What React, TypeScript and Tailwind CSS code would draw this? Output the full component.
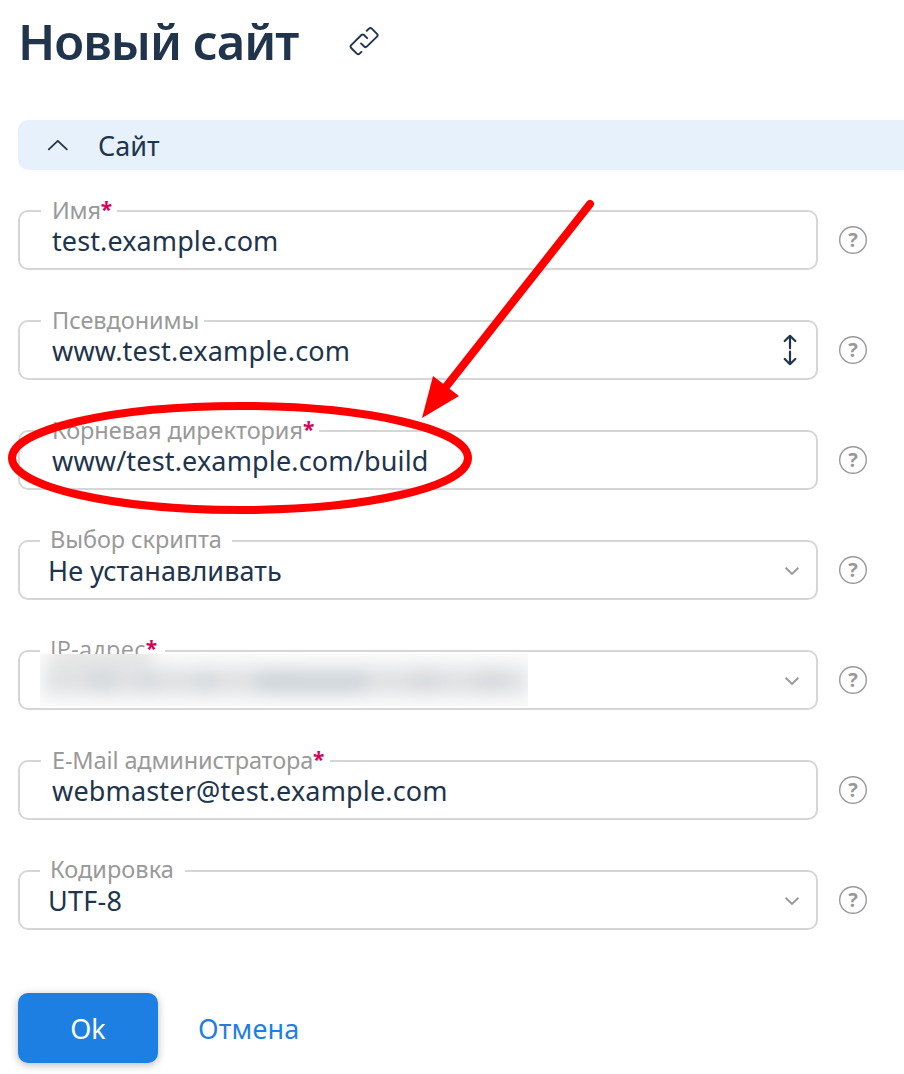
type FieldProps = {
  label: string;
  value?: string;
  required?: boolean;
  kind?: "text" | "list" | "select";
  labelClass: string;
  valueClass?: string;
  redacted?: boolean;
};

function LinkIcon() {
  return (
    <svg className="mt-[26px] h-[30px] w-8" viewBox="348 26 32 30" fill="none" stroke="#20344c" strokeWidth="1.9" strokeLinecap="round" strokeLinejoin="round">
      <path d="M367.2 38.2 L364 35 Q362.7 33.8 361.4 35 L351.2 45.2 Q349.8 46.6 351.2 48 L356.8 53.6 Q358.2 55 359.6 53.6 L361.4 51.8" />
      <path d="M366.7 30.8 L369 28.6 Q370.4 27.3 371.8 28.6 L377 33.8 Q378.4 35.2 377 36.6 L367 46.4 Q365.6 47.8 364.2 46.5 L361 43.4" />
    </svg>
  );
}

function ChevronUp() {
  return (
    <svg className="h-3 w-6" viewBox="0 0 24 12" fill="none" stroke="#20344c" strokeWidth="1.8" strokeLinecap="round" strokeLinejoin="round">
      <path d="M2.8 10.4 L11.8 1.8 L20.8 10.4" />
    </svg>
  );
}

function ChevronDown() {
  return (
    <svg className="mr-[15px] mt-0.5 h-[10px] w-[18px]" viewBox="0 0 18 10" fill="none" stroke="#999999" strokeWidth="1.9">
      <path d="M2.6 1.8 L9 8 L15.4 1.8" />
    </svg>
  );
}

function ExpandIcon() {
  return (
    <svg className="mr-4 h-8 w-5" viewBox="0 0 20 32" fill="none" stroke="#20344c" strokeWidth="2.2" strokeLinecap="round" strokeLinejoin="round">
      <path d="M4.7 7 L10 1.8 L15.3 7 M10 2.4 V14.3" />
      <path d="M4.7 25 L10 30.2 L15.3 25 M10 29.6 V17.7" />
    </svg>
  );
}

function Help() {
  return (
    <span className="flex size-7 items-center justify-center rounded-full text-[20px] font-bold leading-none text-[#999999] shadow-[inset_0_0_0_1.4px_#999999]">
      ?
    </span>
  );
}

function Redaction() {
  return (
    <svg className="absolute left-5 top-[2px] h-[52px] w-[488px]" viewBox="40 654 488 52">
      <defs>
        <filter id="soft" x="-20%" y="-150%" width="140%" height="400%">
          <feGaussianBlur stdDeviation="9" />
        </filter>
      </defs>
      <rect x="40" y="654" width="488" height="52" fill="#fbfbfb" />
      <g filter="url(#soft)">
        <rect x="44" y="667" width="484" height="28" fill="#dfe1e3" />
        <rect x="50" y="644" width="102" height="24" fill="#e6e6e6" />
        <rect x="90" y="670" width="24" height="22" fill="#d3d8dc" />
        <rect x="140" y="674" width="16" height="18" fill="#d3d8dc" />
        <rect x="196" y="672" width="20" height="20" fill="#d3d8dc" />
        <rect x="256" y="671" width="38" height="22" fill="#cdd3d8" />
        <rect x="290" y="672" width="76" height="21" fill="#cdd3d8" />
        <rect x="412" y="671" width="28" height="20" fill="#d5d8dc" />
        <rect x="476" y="671" width="30" height="20" fill="#d5d8dc" />
      </g>
    </svg>
  );
}

function Field({ label, value, required, kind = "text", labelClass, valueClass = "", redacted }: FieldProps) {
  const select = kind === "select";
  return (
    <div className="flex items-center gap-[21px]">
      <div className={`relative flex h-[60px] w-[800px] items-center justify-between rounded-[10px] border-2 border-[#d6d6d6] ${select ? "pl-7" : "pl-8"}`}>
        <div className={`absolute flex h-6 whitespace-nowrap bg-white text-[23.5px] leading-6 text-[#999999] ${select ? "-top-[15px] left-5 pl-[10px]" : "-top-[14px] left-[21px] pl-[11px]"} ${labelClass}`}>
          <span>{label}</span>
          {required && <span className="text-[21px] font-bold leading-[23px] text-[#d5005a]">*</span>}
        </div>
        <span className={`whitespace-nowrap pt-0.5 text-[27px] leading-8 ${valueClass}`}>{value}</span>
        {redacted && <Redaction />}
        {select && <ChevronDown />}
        {kind === "list" && <ExpandIcon />}
      </div>
      <Help />
    </div>
  );
}

function Annotation() {
  return (
    <svg className="pointer-events-none absolute left-0 top-0 h-[540px] w-[620px]" viewBox="0 0 620 540">
      <ellipse cx="240" cy="458" rx="228" ry="52" fill="none" stroke="#ff0000" strokeWidth="8" />
      <path d="M590 204 L445 388" stroke="#ff0000" strokeWidth="8" strokeLinecap="round" />
      <path d="M422 418 L433 376 L459 396 Z" fill="#ff0000" />
    </svg>
  );
}

export default function App() {
  return (
    <main className="relative h-[1074px] overflow-hidden bg-white pl-[18px] font-['Noto_Sans',sans-serif] text-[#20344c]">
      <header className="flex h-[120px] items-start">
        <h1 className="w-[330px] whitespace-nowrap text-[49px] font-semibold leading-[82px] tracking-[-1px]">Новый сайт</h1>
        <LinkIcon />
      </header>
      <section className="flex h-[50px] items-center rounded-l-[10px] bg-[#e6f1fc] pl-7 text-[27px]">
        <ChevronUp />
        <span className="pl-7 pt-0.5">Сайт</span>
      </section>
      <div className="flex flex-col gap-[50px] pt-10">
        <Field label="Имя" value="test.example.com" required labelClass="w-[76px] tracking-[-0.2px]" valueClass="tracking-[0.1px]" />
        <Field label="Псевдонимы" value="www.test.example.com" kind="list" labelClass="w-[163px] tracking-[-0.05px]" valueClass="tracking-[0.18px]" />
        <Field label="Корневая директория" value="www/test.example.com/build" required labelClass="w-[278px] tracking-[-0.03px]" valueClass="tracking-[0.16px]" />
        <Field label="Выбор скрипта" value="Не устанавливать" kind="select" labelClass="w-[192px] tracking-[-0.07px]" valueClass="tracking-[0.08px]" />
        <Field label="IP-адрес" required kind="select" redacted labelClass="w-[125px] font-['Open_Sans'] tracking-[0.25px]" />
        <Field label="E-Mail администратора" value="webmaster@test.example.com" required labelClass="w-[289px] tracking-[-0.14px]" valueClass="tracking-[0.16px]" />
        <Field label="Кодировка" value="UTF-8" kind="select" labelClass="w-[145px] tracking-[0.05px]" valueClass="tracking-[0.25px]" />
      </div>
      <footer className="mt-[63px] flex items-center gap-10">
        <button className="flex h-[70px] w-[140px] items-center justify-center rounded-[10px] bg-[#1d7fe2] pt-0.5 text-[27px] text-white shadow-[0_2px_8px_rgba(0,0,0,0.28)]">Ok</button>
        <a className="pt-0.5 text-[27px] tracking-[0.2px] text-[#1d7fe2]">Отмена</a>
      </footer>
      <Annotation />
    </main>
  );
}
